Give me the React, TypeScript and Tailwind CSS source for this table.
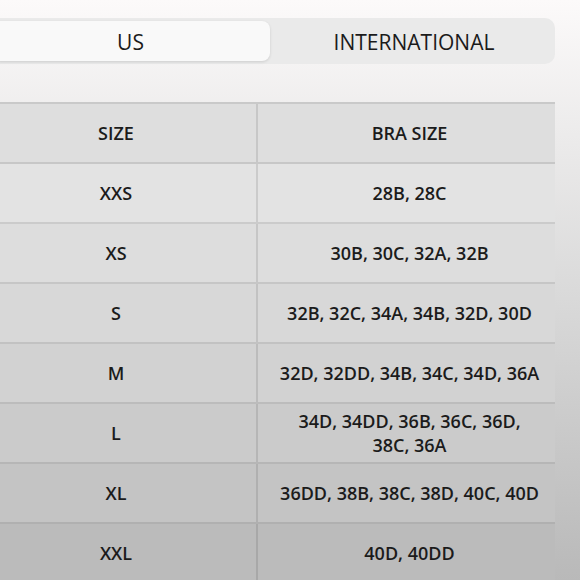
const rows = [
  { size: "XXS", bra: ["28B, 28C"], bg: "bg-[#e3e3e3]" },
  { size: "XS", bra: ["30B, 30C, 32A, 32B"], bg: "bg-[#dddddd]" },
  { size: "S", bra: ["32B, 32C, 34A, 34B, 32D, 30D"], bg: "bg-[#d8d8d8]" },
  { size: "M", bra: ["32D, 32DD, 34B, 34C, 34D, 36A"], bg: "bg-[#d2d2d2]" },
  { size: "L", bra: ["34D, 34DD, 36B, 36C, 36D,", "38C, 36A"], bg: "bg-[#cbcbcb]" },
  { size: "XL", bra: ["36DD, 38B, 38C, 38D, 40C, 40D"], bg: "bg-[#c4c4c4]" },
  { size: "XXL", bra: ["40D, 40DD"], bg: "bg-[#bbbbbb]" },
]

export default function App() {
  return (
    <div
      className="w-[580px] h-[580px] overflow-hidden bg-gradient-to-b from-[#fcfafa] via-[#dadada] to-[#b9b9b9] text-[#1b1b1b]"
      style={{ fontFamily: "'Open Sans', 'Noto Sans', sans-serif" }}
    >
      <div className="pt-[18px]">
        <div className="ml-[-12px] flex h-[46px] w-[567px] rounded-[10px] bg-[#eaeaea] p-[3px]">
          <div className="flex w-[279px] items-center justify-center rounded-[8px] bg-[#f9f9f9] pt-[3px] shadow-[0_1px_3px_rgba(0,0,0,0.12)] text-[21px] font-medium">
            US
          </div>
          <div className="flex flex-1 items-center justify-center pl-[6px] pt-[3px] text-[21px]">
            INTERNATIONAL
          </div>
        </div>
      </div>

      <div className="mt-[38px] ml-[-24px] w-[579px] border-t-2 border-[#c9c9c9]">
        <div className="grid h-[60px] grid-cols-[282px_297px] border-b-2 border-[#c7c7c7] bg-[#dedede] text-[18px] font-semibold">
          <div className="flex items-center justify-center border-r-2 border-[#c7c7c7]">SIZE</div>
          <div className="flex items-center justify-center pl-[6px]">BRA SIZE</div>
        </div>
        {rows.map((r) => (
          <div
            key={r.size}
            className={`grid h-[60px] grid-cols-[282px_297px] border-b-2 border-black/10 text-[18px] font-semibold ${r.bg}`}
          >
            <div className="flex items-center justify-center border-r-2 border-black/10">{r.size}</div>
            <div className="flex flex-col items-center justify-center whitespace-nowrap pl-[6px] leading-[24px]">
              {r.bra.map((line) => (
                <span key={line}>{line}</span>
              ))}
            </div>
          </div>
        ))}
      </div>
    </div>
  )
}
